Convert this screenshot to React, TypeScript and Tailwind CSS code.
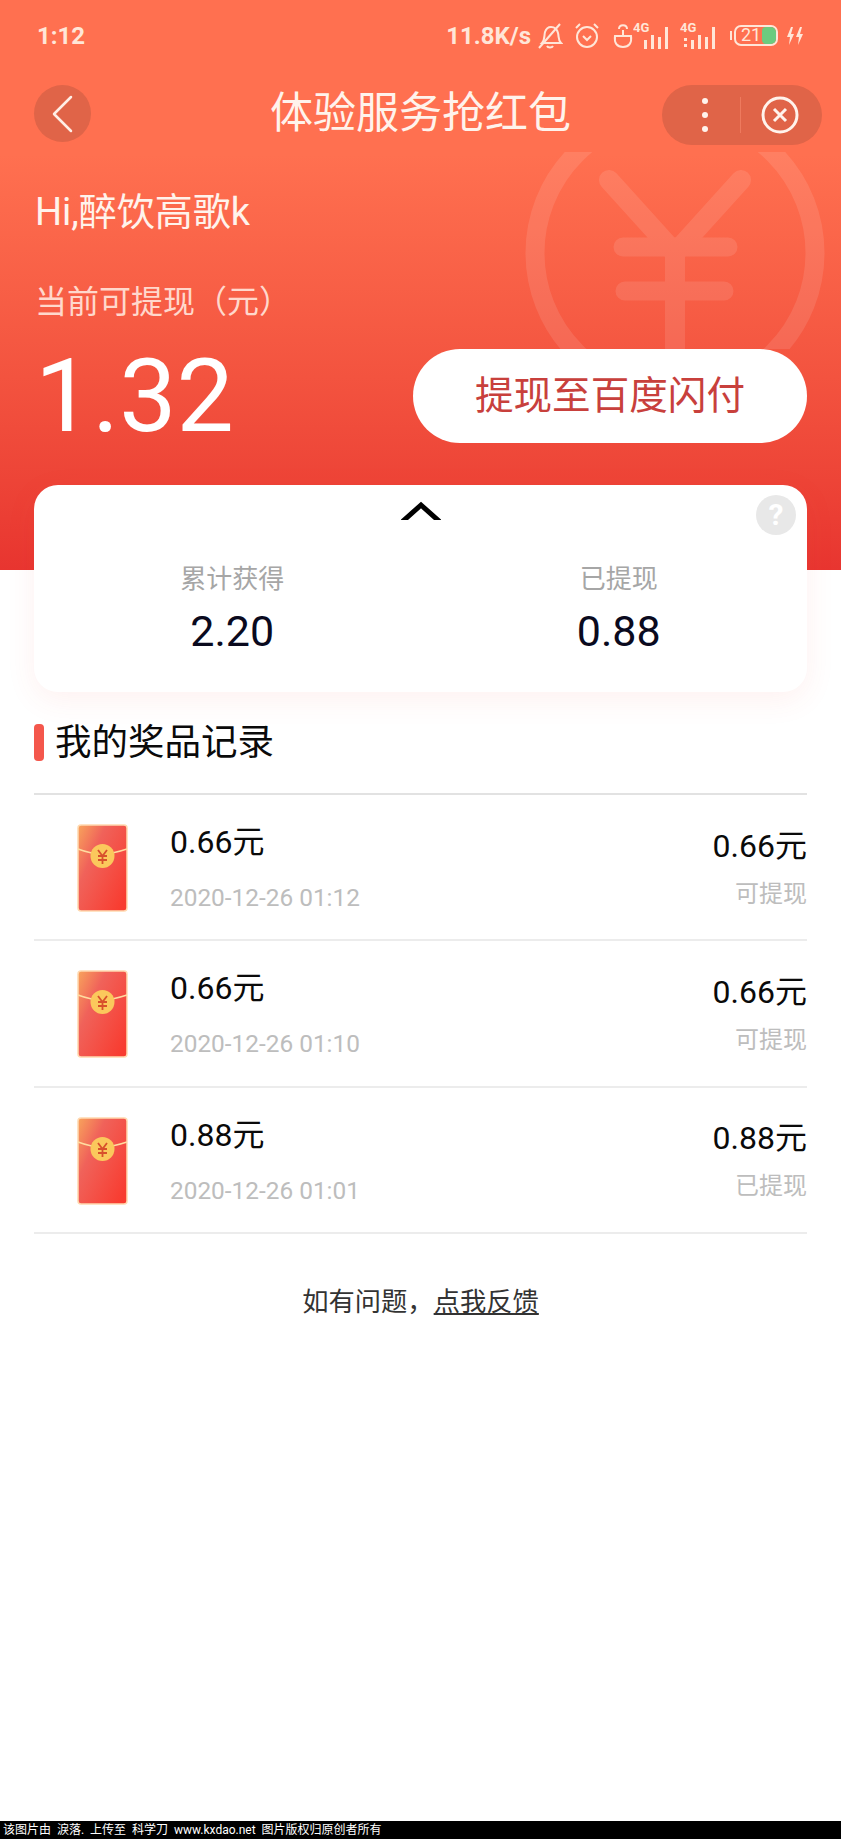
const FONT = "font-['Roboto','Noto_Sans_CJK_SC',sans-serif]";

function Signal({ dots }: { dots?: boolean }) {
  return (
    <svg width="38" height="30" viewBox="0 0 38 30" className="shrink-0" fill="#ffe6d8">
      <text x="0" y="11" fontSize="13" fontWeight="700" fontFamily="Roboto">4G</text>
      {dots && <rect x="4" y="17" width="3" height="3" />}
      {dots && <rect x="4" y="23" width="3" height="3" />}
      <rect x="11" y="19" width="3" height="9" />
      <rect x="18" y="14" width="3" height="14" />
      <rect x="25" y="16" width="3" height="12" />
      <rect x="32" y="6" width="3" height="22" />
    </svg>
  );
}

function StatusBar() {
  return (
    <div className="flex h-[70px] items-center justify-between pl-[37px] pr-[37px] pt-[1px] text-[#ffe6d8]">
      <span className="text-[24px] font-bold">1:12</span>
      <div className="flex items-center">
        <span className="text-[24px] font-bold">11.8K/s</span>
        <svg width="26" height="28" viewBox="0 0 26 28" className="ml-[6px]" fill="none" stroke="#ffe6d8" strokeWidth="2">
          <path d="M5 21c3-3 2-7 3-11 1-3 3-5 6-5s6 2 7 6c1 4 0 7 3 10H5z" />
          <path d="M23 2 2 26" />
          <path d="M10 24c1 2 5 2 6 0" />
        </svg>
        <svg width="26" height="28" viewBox="0 0 26 28" className="ml-[11px]" fill="none" stroke="#ffe6d8" strokeWidth="2">
          <circle cx="13" cy="15" r="10" />
          <path d="M9 14l4 4 4-4" />
          <path d="M2 6l4-4M24 6l-4-4" />
        </svg>
        <svg width="22" height="28" viewBox="0 0 22 28" className="ml-[12px]" fill="none" stroke="#ffe6d8" strokeWidth="2">
          <path d="M7 7c0-5 8-5 8 0" />
          <path d="M11 8v6" />
          <path d="M3 14h16c1 7-2 11-8 11s-9-4-8-11z" />
        </svg>
        <div className="-ml-px"><Signal /></div>
        <div className="ml-[9px]"><Signal dots /></div>
        <div className="ml-[12px] flex items-center">
          <div className="mr-[2px] h-[9px] w-[2px] bg-[#ffe6d8]" />
          <div className="relative h-[21px] w-[44px] overflow-hidden rounded-[7px] border-2 border-[#ffe6d8]">
            <div className="absolute right-0 top-0 h-full w-[14px] rounded-[4px] bg-[#6ccb7f]" />
            <div className="absolute left-[5px] top-[-4px] text-[18px] leading-[24px]">21</div>
          </div>
        </div>
        <svg width="18" height="20" viewBox="0 0 18 20" className="ml-[8px]" fill="#ffe6d8">
          <path d="M5 1 1 11h3l-1 8 5-11H5l2-7zM14 1l-4 10h3l-1 8 5-11h-3l2-7z" />
        </svg>
      </div>
    </div>
  );
}

function NavBar() {
  return (
    <div className="mt-[15px] grid h-[57px] grid-cols-[1fr_auto_1fr] items-start px-[34px]">
      <div className="flex h-[57px] w-[57px] items-center justify-center rounded-full bg-[#e06448]">
        <svg width="24" height="38" viewBox="0 0 24 38" fill="none" stroke="#ffeee6" strokeWidth="2.5" strokeLinecap="round" strokeLinejoin="round">
          <path d="M20 2 3 19l17 17" />
        </svg>
      </div>
      <div className="text-[43px] leading-[57px] text-[#fff3ec]">体验服务抢红包</div>
      <div className="-mr-[15px] flex h-[60px] w-[160px] items-center justify-self-end rounded-full bg-[#e06448]">
        <div className="flex w-[79px] flex-col items-center gap-[8px] border-r border-r-[#ee7a5e] py-[1px] pl-[7px]">
          <div className="h-[6px] w-[6px] rounded-full bg-[#fff3ec]" />
          <div className="h-[6px] w-[6px] rounded-full bg-[#fff3ec]" />
          <div className="h-[6px] w-[6px] rounded-full bg-[#fff3ec]" />
        </div>
        <svg width="38" height="38" viewBox="0 0 38 38" className="ml-[20px]" fill="none" stroke="#fff3ec" strokeWidth="3">
          <circle cx="19" cy="19" r="17" />
          <path d="m13 13 12 12M25 13 13 25" />
        </svg>
      </div>
    </div>
  );
}

function YenMark() {
  return (
    <svg width="300" height="197" viewBox="0 0 300 197" className="absolute left-[525px] top-[152px]" fill="none" stroke="#ffffff">
      <g opacity="0.1">
        <circle cx="150" cy="101" r="140" strokeWidth="19" />
        <path d="M84 28 150 101 216 28" strokeWidth="20" strokeLinecap="round" strokeLinejoin="bevel" />
        <path d="M98 95H203M100 139H199" strokeWidth="19" strokeLinecap="round" />
        <path d="M150 96V197" strokeWidth="20" />
      </g>
    </svg>
  );
}

function Header() {
  return (
    <div className="relative h-[570px] bg-gradient-to-b from-[#ff7050] from-[27%] to-[#e83530]">
      <YenMark />
      <div className="relative">
        <StatusBar />
        <NavBar />
        <div className="mt-[45px] px-[35px] text-[38px] leading-[50px] text-[#fff3ec]">Hi,醉饮高歌k</div>
        <div className="mt-[45px] px-[35px] text-[32px] leading-[40px] text-[#ffd8cc]">当前可提现（元）</div>
        <div className="mt-[27px] flex items-center justify-between pl-[35px] pr-[34px]">
          <span className="text-[102px] font-normal leading-[94px] text-white">1.32</span>
          <div className="flex h-[94px] w-[394px] items-center justify-center rounded-full bg-white text-[38.6px] text-[#c8403c]">
            提现至百度闪付
          </div>
        </div>
      </div>
    </div>
  );
}

function Summary() {
  return (
    <div className="relative mx-[34px] -mt-[85px] h-[207px] rounded-[24px] bg-white shadow-[0_8px_30px_rgba(240,80,60,0.08)]">
      <div className="flex h-[74px] justify-center pt-[15px]">
        <svg width="40" height="20" viewBox="0 0 40 20" fill="none" stroke="#000000" strokeWidth="5">
          <path d="M1 22 20 5l19 17" />
        </svg>
      </div>
      <div className="absolute right-[11px] top-[10px] flex h-[40px] w-[40px] items-center justify-center rounded-full bg-[#e8e8e8] text-[30px] font-bold leading-[40px] text-white">?</div>
      <div className="flex translate-x-[5px]">
        <div className="flex flex-1 flex-col items-center">
          <span className="text-[26px] leading-[40px] text-[#a6a6a6]">累计获得</span>
          <span className="mt-[4px] text-[43px] leading-[56px] text-[#0a0a1e]">2.20</span>
        </div>
        <div className="flex flex-1 flex-col items-center">
          <span className="text-[26px] leading-[40px] text-[#a6a6a6]">已提现</span>
          <span className="mt-[4px] text-[43px] leading-[56px] text-[#0a0a1e]">0.88</span>
        </div>
      </div>
    </div>
  );
}

function Envelope() {
  return (
    <svg width="51" height="88" viewBox="0 0 51 88" className="mt-[2px] shrink-0">
      <defs>
        <linearGradient id="env" x1="0" y1="0" x2="1" y2="0.8">
          <stop offset="0" stopColor="#f8a45c" />
          <stop offset="0.35" stopColor="#f0625a" />
          <stop offset="1" stopColor="#f83c30" />
        </linearGradient>
      </defs>
      <rect x="1" y="1" width="49" height="86" rx="3" fill="url(#env)" stroke="#ffd9b0" strokeWidth="1.5" />
      <path d="M1 25c8 3 14 5 24 5s16-2 25-5" fill="none" stroke="#ffdca0" strokeWidth="1.5" />
      <circle cx="25.5" cy="32" r="12" fill="#fbc85c" />
      <path d="M21 26l4.5 6 4.5-6M21 32h9M21 36h9M25.5 32v8" fill="none" stroke="#d8502c" strokeWidth="1.8" />
    </svg>
  );
}

const records = [
  { a: "0.66元", d: "2020-12-26 01:12", s: "可提现" },
  { a: "0.66元", d: "2020-12-26 01:10", s: "可提现" },
  { a: "0.88元", d: "2020-12-26 01:01", s: "已提现" },
];

function Row({ a, d, s }: { a: string; d: string; s: string }) {
  return (
    <div className="flex h-[146.3px] items-center border-b-2 border-b-[#ececec] pl-[43px]">
      <Envelope />
      <div className="ml-[42px] flex-1 pt-[2px]">
        <div className="text-[32px] leading-[44px] text-[#0a0a0a]">{a}</div>
        <div className="mt-[16px] text-[24.4px] leading-[36px] text-[#bdbdbd]">{d}</div>
      </div>
      <div className="flex flex-col items-end pt-[1px]">
        <div className="text-[32px] leading-[44px] text-[#0a0a0a]">{a}</div>
        <div className="mt-[8px] text-[24px] leading-[36px] text-[#bdbdbd]">{s}</div>
      </div>
    </div>
  );
}

export default function App() {
  return (
    <div className={`${FONT} flex h-[1839px] w-[841px] flex-col overflow-hidden bg-white`}>
      <Header />
      <Summary />
      <div className="mx-[34px] mt-[32px] flex h-[37px] items-center">
        <div className="h-[37px] w-[10px] rounded-[4px] bg-[#f4574c]" />
        <div className="ml-[11px] text-[36.5px] leading-[37px] text-[#0a0a0a]">我的奖品记录</div>
      </div>
      <div className="mx-[34px] mt-[32px] border-t-2 border-t-[#e2e2e2]">
        {records.map((r) => (
          <Row key={r.d} {...r} />
        ))}
      </div>
      <div className="mt-[50px] text-center text-[26.3px] leading-[36px] text-[#333333]">
        如有问题，<span className="underline">点我反馈</span>
      </div>
      <div className="mt-auto flex h-[18px] items-center whitespace-pre bg-black pl-[3px] text-[12px] leading-[18px] text-white">
        该图片由  淚落.  上传至  科学刀  www.kxdao.net  图片版权归原创者所有
      </div>
    </div>
  );
}
